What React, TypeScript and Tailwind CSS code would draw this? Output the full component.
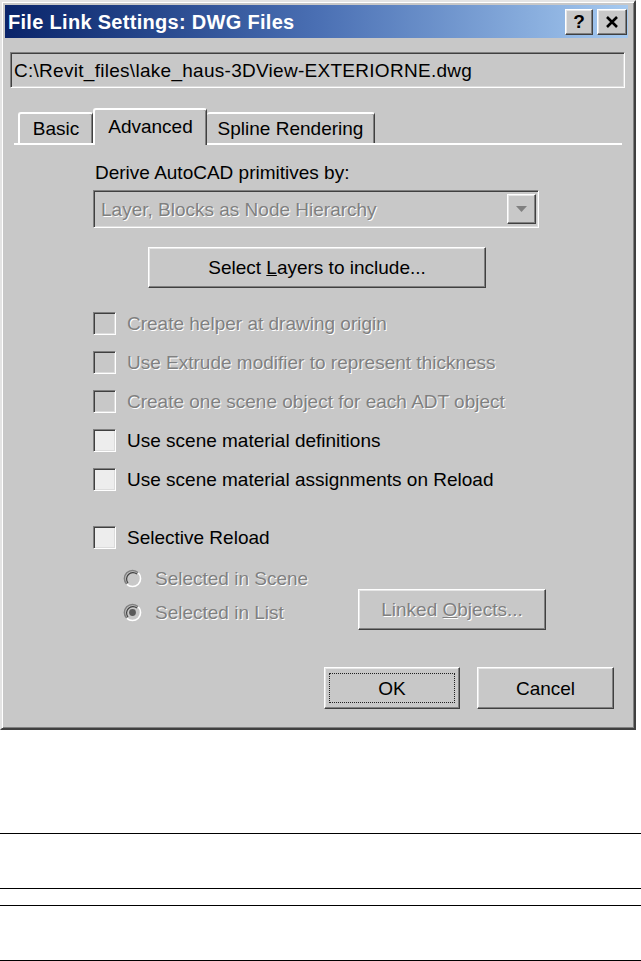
import React from 'react';

const font = "font-['Liberation_Sans',Arial,sans-serif]";

// raised 3D edge used by buttons and tabs
const raised =
  'border border-t-white border-l-white border-r-[#404040] border-b-[#404040] shadow-[inset_-1px_-1px_0_#808080,inset_1px_1px_0_#e6e6e6]';

const sunken =
  'border border-t-[#808080] border-l-[#808080] border-r-white border-b-white shadow-[inset_1px_1px_0_#404040,inset_-1px_-1px_0_#dcdcdc]';

const disabledText = 'text-[#808080] [text-shadow:1px_1px_0_#ffffff]';

function Check({ label, disabled }: { label: string; disabled?: boolean }) {
  return (
    <div className="flex h-[39px] items-center">
      <div className={`h-[23px] w-[23px] ${sunken} ${disabled ? 'bg-[#c8c8c8]' : 'bg-[#ededed]'}`} />
      <span className={`ml-[11px] text-[19px] leading-none ${disabled ? disabledText : 'text-black'}`}>{label}</span>
    </div>
  );
}

function Radio({ label, checked }: { label: string; checked?: boolean }) {
  return (
    <div className="flex h-[24px] items-center">
      <svg width="19" height="19" viewBox="0 0 19 19">
        <circle cx="9.5" cy="9.5" r="8" fill="#c8c8c8" />
        <path d="M3.8 15.2 A8 8 0 0 1 15.2 3.8" fill="none" stroke="#808080" strokeWidth="1.6" />
        <path d="M5 14 A6.4 6.4 0 0 1 14 5" fill="none" stroke="#404040" strokeWidth="1.2" />
        <path d="M15.2 3.8 A8 8 0 0 1 3.8 15.2" fill="none" stroke="#ffffff" strokeWidth="1.6" />
        {checked && <circle cx="9.5" cy="9.5" r="3.4" fill="#5a5a5a" />}
      </svg>
      <span className={`ml-[13px] text-[19px] leading-none ${disabledText}`}>{label}</span>
    </div>
  );
}

export default function App() {
  return (
    <div className={`h-[961px] w-[641px] overflow-hidden bg-white ${font}`}>
      {/* dialog window */}
      <div className="box-border flex h-[730px] w-[636px] flex-col border-2 border-t-[#e4e4e4] border-l-[#e4e4e4] border-r-[#404040] border-b-[#404040] bg-[#c8c8c8] shadow-[inset_1px_1px_0_#ffffff,inset_-1px_-1px_0_#808080]">
        {/* title bar */}
        <div className="ml-[3px] mt-[3px] flex h-[33px] w-[623px] items-center bg-gradient-to-r from-[#0a246a] via-[#4a6fb3] to-[#a6caf0] pl-[3px] pr-[1px]">
          <span className="text-[20px] font-bold leading-none tracking-[0.3px] text-white">File Link Settings: DWG Files</span>
          <div className="ml-auto flex gap-[4px]">
            <div className={`flex h-[26px] w-[28px] items-center justify-center bg-[#c8c8c8] ${raised}`}>
              <span className="text-[19px] font-bold leading-none text-black">?</span>
            </div>
            <div className={`flex h-[26px] w-[30px] items-center justify-center bg-[#c8c8c8] ${raised}`}>
              <svg width="14" height="12" viewBox="0 0 14 12">
                <path d="M2 1 L12 11 M12 1 L2 11" stroke="#000" strokeWidth="2.6" />
              </svg>
            </div>
          </div>
        </div>

        {/* file path */}
        <div className={`ml-[8px] mt-[14px] flex h-[36px] w-[615px] items-center bg-[#c8c8c8] pl-[3px] ${sunken}`}>
          <span className="text-[19px] leading-none tracking-[0.28px] text-black">C:\Revit_files\lake_haus-3DView-EXTERIORNE.dwg</span>
        </div>

        {/* tabs */}
        <div className="ml-[12px] mt-[20px] flex h-[37px] w-[608px] items-end border-b-2 border-white">
          <div className="ml-[4px] flex h-[31px] w-[75px] items-center justify-center rounded-t-[3px] border-l-2 border-r border-t-2 border-l-white border-r-[#404040] border-t-white text-[19px] leading-none shadow-[inset_-1px_0_0_#808080]">
            Basic
          </div>
          <div className="relative z-10 -mb-[2px] flex h-[37px] w-[114px] items-center justify-center rounded-t-[3px] border-l-2 border-r border-t-2 border-l-white border-r-[#404040] border-t-white bg-[#c8c8c8] pb-[3px] text-[19px] leading-none shadow-[inset_-1px_0_0_#808080]">
            Advanced
          </div>
          <div className="flex h-[31px] w-[168px] items-center justify-center rounded-t-[3px] border-r border-t-2 border-r-[#404040] border-t-white text-[19px] leading-none shadow-[inset_-1px_0_0_#808080]">
            Spline Rendering
          </div>
        </div>

        {/* panel */}
        <div className="ml-[93px] mt-[17px] flex h-[20px] items-center text-[19px] leading-none text-black">
          Derive AutoCAD primitives by:
        </div>

        <div className={`ml-[91px] mt-[8px] flex h-[38px] w-[446px] items-center bg-[#c8c8c8] pl-[7px] pr-[2px] ${sunken}`}>
          <span className={`text-[19px] leading-none ${disabledText}`}>Layer, Blocks as Node Hierarchy</span>
          <div className={`ml-auto flex h-[30px] w-[29px] items-center justify-center bg-[#c8c8c8] ${raised}`}>
            <svg width="13" height="8" viewBox="0 0 13 8">
              <path d="M1 1 H12 L6.5 7 Z" fill="#808080" />
            </svg>
          </div>
        </div>

        <div className={`ml-[146px] mt-[19px] flex h-[41px] w-[338px] items-center justify-center bg-[#c8c8c8] ${raised}`}>
          <span className="text-[19px] leading-none text-black">
            Select <u>L</u>ayers to include...
          </span>
        </div>

        <div className="ml-[91px] mt-[16px] flex flex-col">
          <Check label="Create helper at drawing origin" disabled />
          <Check label="Use Extrude modifier to represent thickness" disabled />
          <Check label="Create one scene object for each ADT object" disabled />
          <Check label="Use scene material definitions" />
          <Check label="Use scene material assignments on Reload" />
        </div>

        <div className="ml-[91px] mt-[19px]">
          <Check label="Selective Reload" />
        </div>

        <div className="flex">
          <div className="ml-[121px] mt-[9px] flex w-[235px] flex-col gap-[10px]">
            <Radio label="Selected in Scene" />
            <Radio label="Selected in List" checked />
          </div>
          <div className={`mt-[32px] flex h-[41px] w-[188px] items-center justify-center bg-[#c8c8c8] ${raised}`}>
            <span className={`text-[19px] leading-none ${disabledText}`}>
              Linked <u>O</u>bjects...
            </span>
          </div>
        </div>

        <div className="ml-[322px] mt-[37px] flex gap-[17px]">
          <div className={`flex h-[42px] w-[136px] items-center justify-center bg-[#c8c8c8] ${raised}`}>
            <div className="flex h-[30px] w-[126px] items-center justify-center border border-dotted border-[#202020]">
              <span className="text-[19px] leading-none text-black">OK</span>
            </div>
          </div>
          <div className={`flex h-[42px] w-[137px] items-center justify-center bg-[#c8c8c8] ${raised}`}>
            <span className="text-[19px] leading-none text-black">Cancel</span>
          </div>
        </div>
      </div>

      {/* ruled lines below the dialog */}
      <div className="mt-[103px] h-[1px] w-full bg-black" />
      <div className="mt-[54px] h-[1px] w-full bg-black" />
      <div className="mt-[16px] h-[1px] w-full bg-black" />
      <div className="mt-[54px] h-[1px] w-full bg-black" />
    </div>
  );
}
